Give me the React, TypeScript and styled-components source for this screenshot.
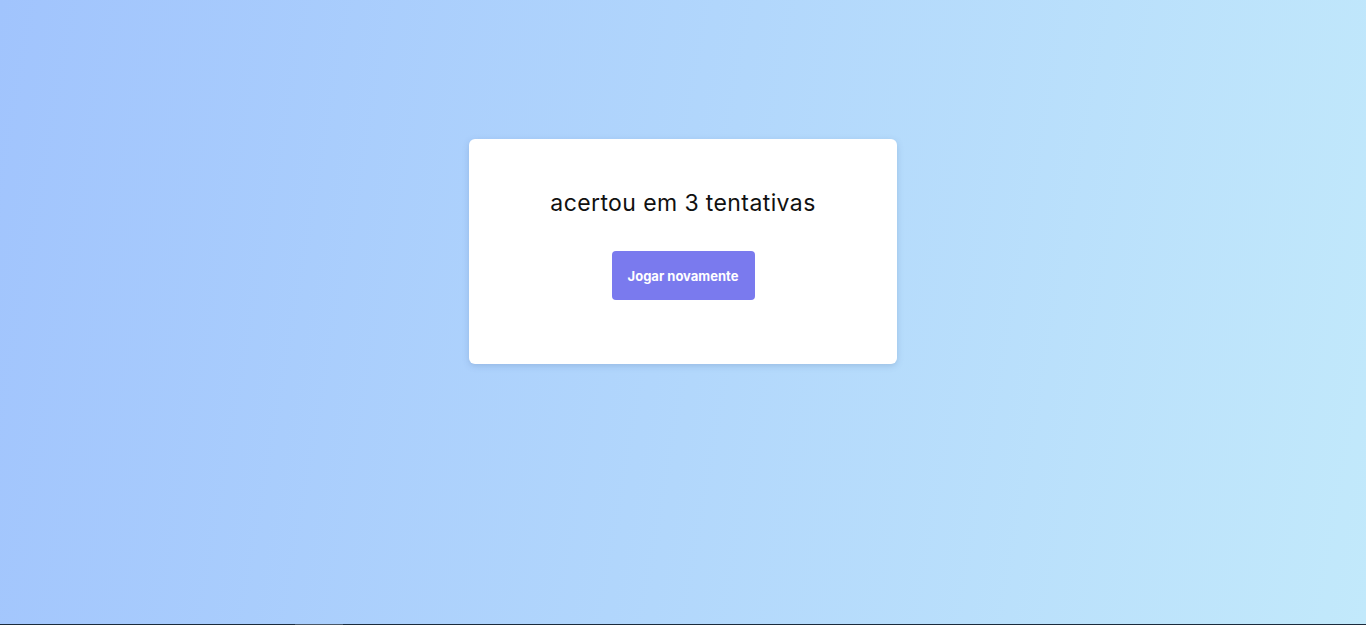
import React from "react";
import styled, { createGlobalStyle } from "styled-components";

const Global = createGlobalStyle`
  html, body { margin: 0; padding: 0; }
  body { font-family: "DM Sans", Inter, "Noto Sans", sans-serif; }
  * { box-sizing: border-box; }
`;

const Page = styled.div`
  height: 625px;
  display: flex;
  flex-direction: column;
  overflow: hidden;
`;

const Main = styled.main`
  flex: 1;
  background-image: linear-gradient(100deg, #a1c4fd 0%, #c2e9fb 100%);
  display: flex;
  justify-content: center;
  align-items: flex-start;
  padding-top: 139px;
`;

const Card = styled.section`
  width: 428px;
  height: 225px;
  background: #ffffff;
  border-radius: 6px;
  box-shadow: 0 2px 6px rgba(80, 110, 160, 0.25);
  display: flex;
  flex-direction: column;
  align-items: center;
  padding-top: 49px;
`;

const Title = styled.h2`
  margin: 0;
  font-family: Inter, "Noto Sans", sans-serif;
  font-weight: 400;
  font-size: 23px;
  line-height: 30px;
  color: #111111;
  letter-spacing: 0.4px;
`;

const Button = styled.button`
  margin-top: 33px;
  width: 143px;
  height: 49px;
  border: none;
  border-radius: 4px;
  background: #7a7aee;
  color: #ffffff;
  font-family: Inter, "Noto Sans", sans-serif;
  font-weight: 700;
  font-size: 13px;
  cursor: pointer;
`;

const BottomBar = styled.div`
  height: 1px;
  background: #1b2b3c;
  display: flex;
`;

const BarThumb = styled.div`
  margin-left: 295px;
  width: 48px;
  background: #4a5868;
`;

export default function App() {
  return (
    <>
      <Global />
      <Page>
        <Main>
          <Card>
            <Title>acertou em 3 tentativas</Title>
            <Button>Jogar novamente</Button>
          </Card>
        </Main>
        <BottomBar>
          <BarThumb />
        </BottomBar>
      </Page>
    </>
  );
}
